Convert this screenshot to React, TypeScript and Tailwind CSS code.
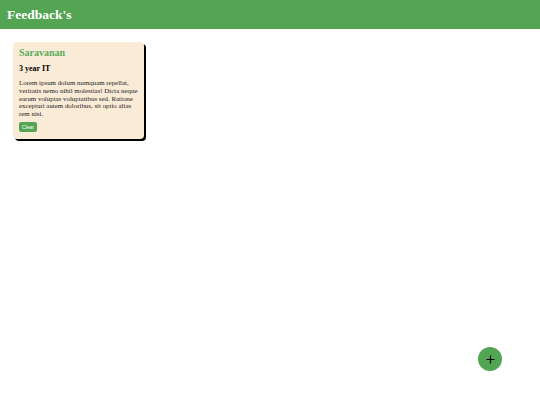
import React from "react";

export default function App() {
  return (
    <div className="min-h-[405px] bg-white" style={{ fontFamily: '"Liberation Serif", serif' }}>
      <header className="h-[29px] bg-[#53a553] flex items-center pl-[7px]">
        <h1 className="text-white font-bold text-[13.5px] leading-none">Feedback's</h1>
      </header>
      <main className="pt-[13px] pl-[13px]">
        <div className="w-[131px] rounded-[4px] bg-[#faebd7] shadow-[2px_2px_0.5px_#000] pl-[6px] pr-[3px] pt-[5px] pb-[7px]">
          <h2 className="text-[#5cab5c] font-bold text-[10px] leading-[12px]">Saravanan</h2>
          <h3 className="mt-[5px] text-black font-bold text-[8px] leading-[10px]">3 year IT</h3>
          <p className="mt-[5px] text-[#222] text-[6.9px] leading-[7.8px]">
            Lorem ipsum dolum numquam repellat, veritatis nemo nihil molestias! Dicta neque earum voluptas voluptatibus sed. Ratione excepturi autem doloribus, sit optio alias rem nisi.
          </p>
          <button
            className="mt-[4px] h-[10px] w-[18px] rounded-[2px] bg-[#53a553] text-white text-[5px] leading-[10px] flex items-center justify-center"
            style={{ fontFamily: '"Liberation Sans", sans-serif' }}
          >
            Clear
          </button>
        </div>
      </main>
      <button className="fixed left-[478px] top-[347px] w-[24px] h-[24px] rounded-full bg-[#53a553] flex items-center justify-center">
        <svg width="9" height="9" viewBox="0 0 9 9">
          <path d="M4.5 0.5v8M0.5 4.5h8" stroke="#000" strokeWidth="1.2" />
        </svg>
      </button>
    </div>
  );
}
